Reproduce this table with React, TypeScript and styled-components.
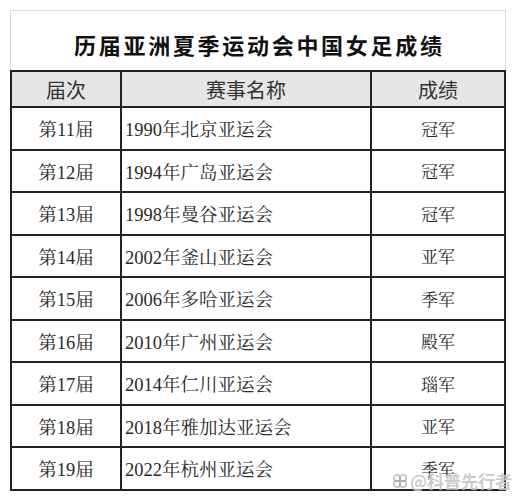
import React from "react";
import styled, { createGlobalStyle } from "styled-components";

const Global = createGlobalStyle`
  html, body { margin: 0; padding: 0; background: #fff; }
  body { width: 516px; height: 500px; overflow: hidden; }
`;

const Page = styled.div`
  position: relative;
  padding: 10px 10px 0 10px;
  width: 516px;
  height: 500px;
  box-sizing: border-box;
`;

const TitleBox = styled.div`
  height: 60px;
  box-sizing: border-box;
  border: 1.5px solid #dcdcdc;
  border-bottom: none;
  display: flex;
  align-items: center;
  justify-content: center;
  padding-top: 6px;
`;

const Title = styled.h1`
  margin: 0;
  font-family: "Noto Sans CJK SC", "Liberation Sans", sans-serif;
  font-size: 22px;
  font-weight: 700;
  letter-spacing: 2.7px;
  color: #111;
  padding-left: 2.7px;
`;

const Table = styled.div`
  display: grid;
  grid-template-columns: 110px 250px 134px;
  border-top: 2px solid #222;
  border-left: 2px solid #222;
`;

const HeadCell = styled.div`
  height: 36px;
  box-sizing: border-box;
  border-right: 2px solid #222;
  border-bottom: 2px solid #222;
  background: #e6e6e6;
  display: flex;
  align-items: center;
  justify-content: center;
  font-family: "Noto Sans CJK SC", "Liberation Sans", sans-serif;
  font-size: 20px;
  color: #333;
`;

const Cell = styled.div<{ $align?: "left" | "center"; $size: number }>`
  height: 42.5px;
  box-sizing: border-box;
  border-right: 2px solid #222;
  border-bottom: 2px solid #222;
  display: flex;
  align-items: center;
  justify-content: ${(p) => (p.$align === "left" ? "flex-start" : "center")};
  padding-left: ${(p) => (p.$align === "left" ? "3px" : "0")};
  font-family: "Liberation Serif", "Noto Serif CJK SC", "Noto Sans CJK SC", serif;
  font-size: ${(p) => p.$size}px;
  color: #2a2a2a;
  white-space: nowrap;
`;

const Watermark = styled.div`
  position: absolute;
  left: 392px;
  top: 468px;
  display: flex;
  align-items: center;
  gap: 2px;
  font-family: "Noto Sans CJK SC", "Liberation Sans", sans-serif;
  font-size: 17px;
  font-weight: 700;
  color: rgba(150, 150, 150, 0.5);
  text-shadow: 0 0 1px rgba(255, 255, 255, 0.9);
  pointer-events: none;
`;

const rows: [string, string, string][] = [
  ["第11届", "1990年北京亚运会", "冠军"],
  ["第12届", "1994年广岛亚运会", "冠军"],
  ["第13届", "1998年曼谷亚运会", "冠军"],
  ["第14届", "2002年釜山亚运会", "亚军"],
  ["第15届", "2006年多哈亚运会", "季军"],
  ["第16届", "2010年广州亚运会", "殿军"],
  ["第17届", "2014年仁川亚运会", "瑙军"],
  ["第18届", "2018年雅加达亚运会", "亚军"],
  ["第19届", "2022年杭州亚运会", "季军"],
];

export default function App() {
  return (
    <>
      <Global />
      <Page>
        <TitleBox>
          <Title>历届亚洲夏季运动会中国女足成绩</Title>
        </TitleBox>
        <Table>
          <HeadCell>届次</HeadCell>
          <HeadCell>赛事名称</HeadCell>
          <HeadCell>成绩</HeadCell>
          {rows.map((r) => (
            <React.Fragment key={r[0]}>
              <Cell $size={18.5}>{r[0]}</Cell>
              <Cell $align="left" $size={18.5}>{r[1]}</Cell>
              <Cell $size={17}>{r[2]}</Cell>
            </React.Fragment>
          ))}
        </Table>
        <Watermark>
          <svg width="16" height="16" viewBox="0 0 16 16">
            <circle cx="5" cy="5" r="3.2" fill="none" stroke="rgba(150,150,150,0.6)" strokeWidth="1.6" />
            <circle cx="11" cy="5" r="3.2" fill="none" stroke="rgba(150,150,150,0.6)" strokeWidth="1.6" />
            <circle cx="5" cy="11" r="3.2" fill="none" stroke="rgba(150,150,150,0.6)" strokeWidth="1.6" />
            <circle cx="11" cy="11" r="3.2" fill="none" stroke="rgba(150,150,150,0.6)" strokeWidth="1.6" />
          </svg>
          <span>@科普先行者</span>
        </Watermark>
      </Page>
    </>
  );
}
